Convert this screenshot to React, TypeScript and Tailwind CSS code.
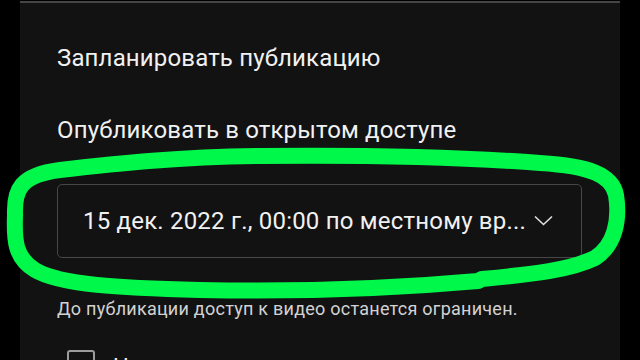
import { useState } from "react";

// обводка-выделение поверх выпадающего списка
function Highlight() {
  return (
    <svg
      className="pointer-events-none absolute left-0 top-0"
      width="640"
      height="360"
      viewBox="0 0 640 360"
    >
      <path
        d="M 15 215 C 14 190 20 175 60 170 C 120 163 180 157 260 156 C 360 155 460 157 540 163 C 590 166 612 175 616 195 C 620 220 615 245 595 258 C 570 270 535 274 482 279 L 478 281 C 400 288 300 292 200 290 C 120 288 60 285 35 270 C 15 258 14 240 15 215 Z"
        fill="none"
        stroke="#00f84a"
        strokeWidth="16"
        strokeLinejoin="round"
      />
    </svg>
  );
}

export default function App() {
  const [checked, setChecked] = useState(false);

  return (
    <div className="relative h-[360px] w-[640px] overflow-hidden bg-black font-['Roboto','Noto_Sans',sans-serif]">
      <div className="mx-[20px] mt-px h-[359px] border-t-2 border-[#454545] bg-[#121212] pl-[37px]">
        <h2 className="mt-[39px] text-[24px] leading-[32px] tracking-[0.15px] text-[#f1f1f1]">
          Запланировать публикацию
        </h2>
        <h3 className="mt-[40px] text-[24px] leading-[32px] tracking-[0.15px] text-[#f1f1f1]">
          Опубликовать в открытом доступе
        </h3>

        {/* выбор даты */}
        <button className="mt-[38px] flex h-[74px] w-[525px] items-center justify-between rounded-[5px] border border-[#474747] pl-[25px] pr-[28px] text-left">
          <span className="text-[24px] leading-[30px] tracking-[0.2px] text-[#f1f1f1]">
            15 дек. 2022 г., 00:00 по местному вр...
          </span>
          <svg width="19" height="11" viewBox="0 0 19 11" className="mb-[1px]">
            <path
              d="M1 1.5 L9.5 9.5 L18 1.5"
              fill="none"
              stroke="#e0e0e0"
              strokeWidth="1.6"
            />
          </svg>
        </button>

        <p className="mt-[39px] text-[18px] leading-[24px] tracking-[0.25px] text-[#d2d2d2]">
          До публикации доступ к видео останется ограничен.
        </p>

        <label className="ml-[10px] mt-[29px] flex items-start gap-[18px]">
          <input
            type="checkbox"
            checked={checked}
            onChange={(e) => setChecked(e.target.checked)}
            className="h-[27px] w-[28px] appearance-none rounded-[3px] border-2 border-[#9c9c9c] bg-transparent"
          />
          <span className="mt-[3px] text-[22px] leading-[28px] text-[#f1f1f1]">
            Настроить премьеру
          </span>
        </label>
      </div>
      <Highlight />
    </div>
  );
}
